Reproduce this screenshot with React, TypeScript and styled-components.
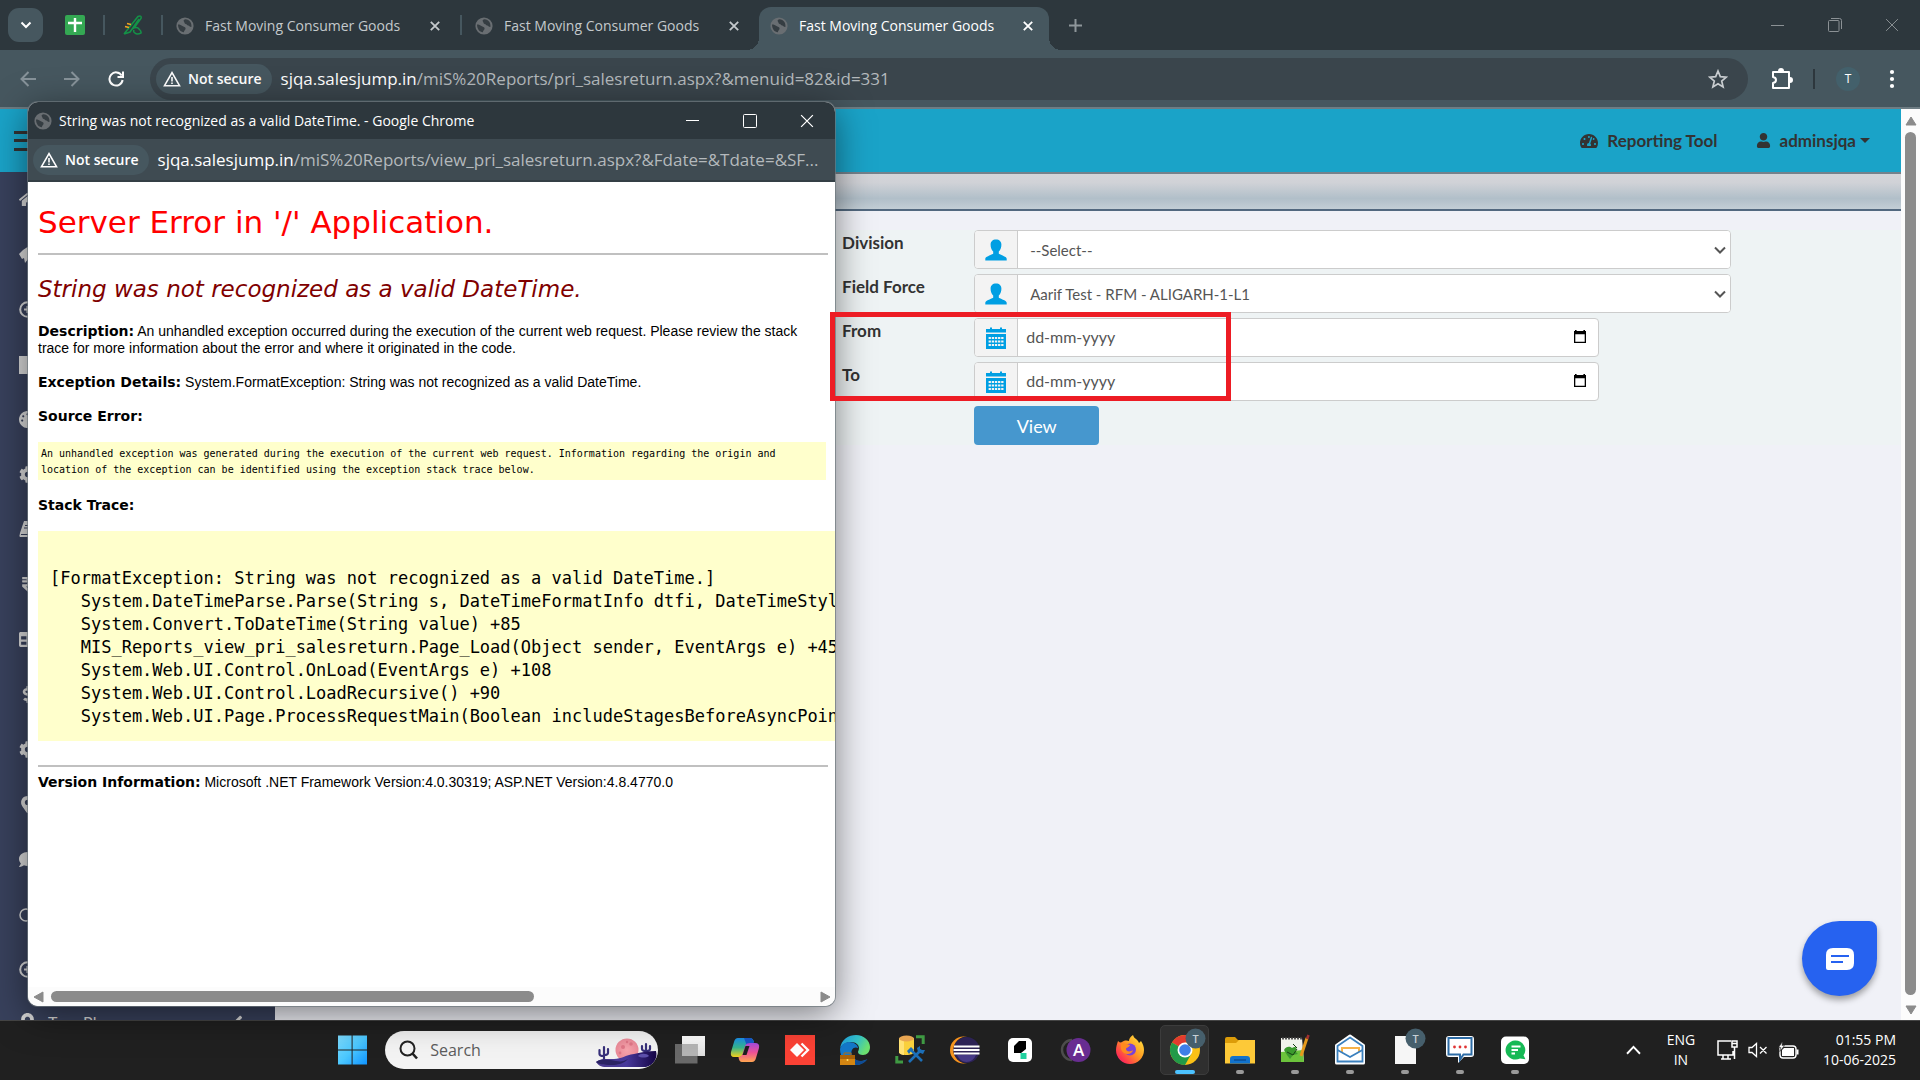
import React from 'react';
import styled, { createGlobalStyle, css } from 'styled-components';
import {
  FaHome, FaPalette, FaCog, FaRupeeSign, FaTable,
  FaDollarSign, FaMapMarkerAlt, FaComment, FaUser, FaTachometerAlt, FaAngleLeft,
} from 'react-icons/fa';

const GlobalStyle = createGlobalStyle`
  * { box-sizing: border-box; }
  html, body { margin: 0; height: 100%; overflow: hidden; }
  body { font-family: "Open Sans", "Noto Sans", sans-serif; }
  button, input, select { font: inherit; margin: 0; }
  svg { display: block; flex: none; }
`;

const uiFont = '"Open Sans", "Noto Sans", sans-serif';
const pageFont = 'Lato, "Open Sans", sans-serif';

const Screen = styled.div`
  height: 100vh;
  display: flex;
  flex-direction: column;
  position: relative;
  overflow: hidden;
`;

const PlainButton = styled.button`
  background: none;
  border: 0;
  padding: 0;
  color: inherit;
  display: inline-flex;
  align-items: center;
  justify-content: center;
`;

/* ---------- browser chrome ---------- */

const TabStrip = styled.header`
  height: 50px;
  flex: none;
  display: flex;
  align-items: center;
  padding: 0 0 0 8px;
  background: #2d373d;
  color: #c4c9cc;
`;

const TabSearch = styled(PlainButton)`
  width: 35px;
  height: 34px;
  margin-right: 22px;
  border-radius: 11px;
  background: #46575f;
  color: #fff;
`;

const Divider = styled.span<{ $dark?: boolean; $space: number }>`
  width: 2px;
  height: 20px;
  flex: none;
  margin: 0 ${p => p.$space}px;
  background: ${p => (p.$dark ? '#2d373d' : '#46575f')};
`;

const Tab = styled.div<{ $active?: boolean }>`
  position: relative;
  display: flex;
  align-items: center;
  width: ${p => (p.$active ? 290 : 297)}px;
  height: 43px;
  align-self: flex-end;
  padding: ${p => (p.$active ? '0 16px 6px 11px' : '0 20px 6px 13px')};
  font-size: 14px;
  ${p => p.$active && css`
    background: #46575f;
    color: #fff;
    border-radius: 12px 12px 0 0;
    &::before, &::after {
      content: "";
      position: absolute;
      bottom: 0;
      width: 12px;
      height: 12px;
    }
    &::before {
      left: -12px;
      background: radial-gradient(circle at 0 0, transparent 12px, #46575f 12px);
    }
    &::after {
      right: -12px;
      background: radial-gradient(circle at 100% 0, transparent 12px, #46575f 12px);
    }
  `}
`;

const TabTitle = styled.span`
  flex: 1;
  margin-left: 11px;
  white-space: nowrap;
  overflow: hidden;
`;

const TabRow = styled.div`
  display: flex;
  align-items: center;
  height: 50px;
  margin-left: -18px;
`;

const NewTab = styled(PlainButton)`
  margin-left: 20px;
`;

const CaptionButtons = styled.div<{ $bright?: boolean }>`
  margin-left: auto;
  display: flex;
  color: ${p => (p.$bright ? '#fff' : '#8b9195')};
  button { width: 57px; height: ${p => (p.$bright ? 36 : 48)}px; }
`;

const Toolbar = styled.div`
  height: 59px;
  flex: none;
  display: flex;
  align-items: center;
  padding: 0 16px 0 12px;
  background: #46575f;
  border-bottom: 2px solid #6e7d84;
  color: #fff;
`;

const NavButton = styled(PlainButton)<{ $off?: boolean }>`
  width: 32px;
  height: 32px;
  margin-right: 12px;
  color: ${p => (p.$off ? '#87939a' : '#fff')};
`;

const Omnibox = styled.div`
  flex: 1;
  height: 42px;
  display: flex;
  align-items: center;
  margin: 0 23px 0 6px;
  padding: 0 20px 0 6px;
  border-radius: 21px;
  background: #3a454c;
`;

const SecureChip = styled(PlainButton)`
  height: 30px;
  flex: none;
  gap: 7px;
  padding: 0 10px 0 7px;
  border-radius: 15px;
  background: #46575f;
  color: #fff;
  font-size: 14px;
  font-weight: 600;
`;

const Address = styled.span`
  flex: 1;
  margin-left: 9px;
  white-space: nowrap;
  color: #b4b9bc;
  font-size: 17px;
  b { color: #fff; font-weight: 400; }
`;

const Avatar = styled(PlainButton)`
  width: 24px;
  height: 24px;
  margin: 0 20px 0 1px;
  border-radius: 50%;
  background: #43606b;
  font-size: 12px;
`;

/* ---------- web page ---------- */

const Viewport = styled.div`
  flex: 1;
  min-height: 0;
  display: flex;
  background: #f0f1f7;
  font-family: ${pageFont};
`;

const Page = styled.div`
  flex: 1;
  min-width: 0;
  display: flex;
  flex-direction: column;
`;

const TopBar = styled.div`
  height: 63px;
  flex: none;
  display: flex;
  align-items: center;
  padding: 0 31px 0 14px;
  background: #1aa3c8;
  color: #333;
`;

const Burger = styled(PlainButton)`
  width: 24px;
  height: 20px;
  flex-direction: column;
  justify-content: space-between;
  i { width: 24px; height: 3px; background: #333; }
`;

const TopLinks = styled.nav`
  margin-left: auto;
  display: flex;
  gap: 38px;
  a {
    display: flex;
    align-items: center;
    gap: 9px;
    color: inherit;
    text-decoration: none;
    font-weight: 700;
    font-size: 17px;
  }
`;

const Caret = styled.i`
  margin-left: -5px;
  border: 5px solid transparent;
  border-top-color: #333;
  border-bottom: 0;
`;

const Columns = styled.div`
  flex: 1;
  min-height: 0;
  display: flex;
`;

const SideMenu = styled.nav`
  width: 275px;
  flex: none;
  overflow: hidden;
  background: #38415c;
`;

const MenuLink = styled.a<{ $low?: boolean }>`
  display: flex;
  align-items: center;
  height: ${p => (p.$low ? 49 : 55)}px;
  padding: 0 27px 0 19px;
  gap: 12px;
  color: #d8d8d8;
  font-size: 16px;
  text-decoration: none;
  span { flex: 1; }
`;

const Content = styled.main`
  flex: 1;
  min-width: 0;
`;

const Ribbon = styled.div`
  height: 39px;
  border-top: 2px solid #74828c;
  border-bottom: 2px solid #52687f;
  background: linear-gradient(#d4d5d9, #d0d2d7 25%, #b1bfc9 70%, #c3ced6);
`;

const Form = styled.form`
  display: grid;
  grid-template-columns: 35% 8% minmax(0, 1fr);
  grid-auto-rows: 39px;
  row-gap: 5px;
  margin-top: 19px;
  background: #eef3f4;
`;

const Label = styled.label`
  grid-column: 2;
  font-size: 17px;
  font-weight: 700;
  line-height: 26px;
  color: #333;
  margin-left: -2px;
`;

const Group = styled.div<{ $short?: boolean }>`
  grid-column: 3;
  display: grid;
  grid-template-columns: 43px minmax(0, 1fr);
  width: ${p => (p.$short ? '67.4%' : '81.7%')};
  border: 1px solid #ccc;
  border-radius: 4px;
  background: #fff;
  color: #555;
  overflow: hidden;
`;

const Addon = styled.span`
  display: flex;
  align-items: center;
  justify-content: center;
  border-right: 1px solid #ccc;
  background: #f3f3f3;
  color: #009fe3;
`;

const SelectWrap = styled.div`
  display: grid;
  align-items: center;
  > * { grid-area: 1 / 1; }
  > svg { justify-self: end; margin-right: 4px; pointer-events: none; }
`;

const Select = styled.select`
  appearance: none;
  height: 37px;
  padding: 0 12px;
  border: 0;
  background: #fff;
  color: #555;
  font-size: 15px;
`;

const DateField = styled.div`
  display: flex;
  align-items: center;
  padding-right: 11px;
  padding-bottom: 2px;
  input {
    flex: 1;
    min-width: 0;
    height: 35px;
    border: 0;
    padding: 0 8px;
    background: none;
    font-size: 16px;
    color: #555;
  }
  input::placeholder { color: #555; opacity: 1; }
`;

const ViewButton = styled.button`
  grid-column: 3;
  width: 125px;
  height: 39px;
  border: 0;
  border-radius: 4px;
  background: #4697ce;
  color: #fff;
  font-size: 18px;
`;

const VScroll = styled.div`
  width: 19px;
  flex: none;
  display: flex;
  flex-direction: column;
  align-items: center;
  justify-content: space-between;
  padding: 6px 0 4px;
  background: #fcfcfc;
  color: #8b8b8b;
  i { flex: 1; width: 11px; margin: 5px 0 9px; border-radius: 6px; background: currentColor; }
`;

const ChatBubble = styled(PlainButton)`
  position: absolute;
  right: 43px;
  bottom: 84px;
  width: 75px;
  height: 75px;
  border-radius: 38px 8px 38px 38px;
  background: #2662f0;
  box-shadow: 0 4px 6px rgba(0, 0, 0, 0.35);
`;

const RedFrame = styled.div`
  position: absolute;
  left: 830px;
  top: 312px;
  width: 401px;
  height: 89px;
  border: 5px solid #ed1c24;
  z-index: 3;
  pointer-events: none;
`;

/* ---------- pop-up window ---------- */

const Popup = styled.section`
  position: absolute;
  left: 28px;
  top: 102px;
  width: 807px;
  height: 904px;
  z-index: 2;
  display: flex;
  flex-direction: column;
  overflow: hidden;
  border-radius: 10px;
  background: #fff;
  box-shadow: 0 0 0 1px rgba(110, 120, 125, 0.7), 0 8px 36px rgba(0, 0, 0, 0.5);
`;

const PopupTitle = styled.div`
  height: 37px;
  flex: none;
  display: flex;
  align-items: center;
  padding-left: 6px;
  background: #2d373d;
  color: #fff;
  font-size: 14px;
  > span { margin-left: 7px; }
`;

const PopupAddress = styled.div`
  height: 43px;
  flex: none;
  display: flex;
  align-items: center;
  padding: 0 5px;
  background: #3f4b52;
  border-bottom: 2px solid #343f45;
`;

const ErrorPage = styled.article`
  flex: 1;
  min-height: 0;
  padding: 0 0 0 10px;
  overflow: hidden;
  color: #000;
  font-family: "Liberation Sans", Arial, sans-serif;
  font-size: 14px;
  line-height: 17px;
  b { font-family: "DejaVu Sans", Verdana, sans-serif; font-size: 14px; }
  hr { margin: 0 7px 7px 0; border: 0; height: 2px; background: #c0c0c0; }
  p { margin: 0 24px 17px 0; }
`;

const ErrorTitle = styled.h1`
  margin: 22px 0 13px;
  font: 400 31px/36px "DejaVu Sans", Verdana, sans-serif;
  color: #f00;
`;

const ErrorSubtitle = styled.h2`
  margin: 19px 0;
  font: italic 400 23px/30px "DejaVu Sans", Verdana, sans-serif;
  color: #800000;
`;

const SourceBox = styled.pre`
  margin: 0 9px 17px 0;
  padding: 4px 3px 2px;
  background: #ffc;
  font: 10px/16px "DejaVu Sans Mono", monospace;
`;

const StackBox = styled.pre`
  margin: 0 0 24px;
  padding: 13px 12px;
  background: #ffc;
  overflow: hidden;
  font: 17px/23px "DejaVu Sans Mono", "Liberation Mono", monospace;
`;

const HScroll = styled.div`
  height: 19px;
  flex: none;
  display: flex;
  align-items: center;
  justify-content: space-between;
  padding: 0 4px 0 5px;
  background: #fcfcfc;
  color: #8b8b8b;
  i { width: 483px; height: 11px; margin: 0 auto 0 6px; border-radius: 6px; background: currentColor; }
`;

/* ---------- taskbar ---------- */

const Taskbar = styled.footer`
  height: 60px;
  flex: none;
  display: flex;
  align-items: center;
  padding: 0 24px 1px 0;
  border-top: 1px solid #454545;
  background: #202020;
  color: #fff;
`;

const Apps = styled.div`
  display: flex;
  align-items: center;
  margin-left: 17.1%;
`;

const AppButton = styled(PlainButton)<{ $active?: boolean }>`
  width: 55px;
  height: 58px;
  position: relative;
  ${p => p.$active && css`
    &::before {
      content: "";
      position: absolute;
      inset: 4px 3px;
      border: 1px solid #3c3c3c;
      border-radius: 5px;
      background: #2f2f2f;
    }
  `}
  > svg { position: relative; }
`;

const RunMark = styled.i<{ $active?: boolean }>`
  position: absolute;
  bottom: 5px;
  width: ${p => (p.$active ? 20 : 8)}px;
  height: 4px;
  border-radius: 2px;
  background: ${p => (p.$active ? '#4cc2ff' : '#9a9a9a')};
`;

const SearchPill = styled.label`
  width: 273px;
  height: 38px;
  display: flex;
  align-items: center;
  margin: 0 4px 0 6px;
  padding-left: 14px;
  border-radius: 19px;
  background: #f3f3f3;
  overflow: hidden;
  input {
    flex: 1;
    min-width: 0;
    margin-left: 12px;
    padding: 0;
    border: 0;
    background: none;
    font-size: 16px;
  }
  input::placeholder { color: #5c5c5c; opacity: 1; }
`;

const Tray = styled.div`
  margin-left: auto;
  display: flex;
  align-items: center;
  font-size: 14px;
  line-height: 20px;
`;

const Stack = styled.div<{ $right?: boolean }>`
  display: flex;
  flex-direction: column;
  min-width: 40px;
  margin-left: ${p => (p.$right ? 0 : 20)}px;
  align-items: ${p => (p.$right ? 'flex-end' : 'center')};
`;

const TrayIcons = styled.div`
  display: flex;
  align-items: center;
  gap: 10px;
  margin: 0 24px 0 16px;
`;

/* ---------- drawings ---------- */

const Globe = () => (
  <svg width="18" height="18" viewBox="0 0 18 18">
    <circle cx="9" cy="9" r="8.6" fill="#696e72" />
    <path d="M2 7.500c2 0 3.400.6 4.400 1.600 1.200 1.100 3.200.6 3.200 2.400 0 1.600-1.600 1.500-1.700 3.800C4.500 15 2 12 2 7.500zM9.500 2.200c-1.300.4-2.600 1.200-1.600 2.300.9 1 .2 2 1.700 2.400 1.500.3 1.200 1.500 2.600 1.500 1.200 0 1.100 1.700 3.200 1.600C16 6 13.500 2.300 9.500 2.200z" fill="#353d42" />
  </svg>
);

const CloseX = ({ size = 10, w = 1.8 }: { size?: number; w?: number }) => (
  <svg width={size} height={size} viewBox="0 0 10 10" fill="none" stroke="currentColor" strokeWidth={w}>
    <path d="M.8.8l8.400 8.400M9.200.8L.8 9.200" />
  </svg>
);

const Warn = () => (
  <svg width="18" height="16" viewBox="0 0 18 16" fill="none" stroke="#fff" strokeWidth="1.6">
    <path d="M9 1.600L1.500 14.700h15z" />
    <path d="M9 6v4.500M9 11.500v1.600" />
  </svg>
);

const Tri = ({ d }: { d: string }) => (
  <svg width="12" height="12" viewBox="0 0 12 12" fill="currentColor" stroke="currentColor" strokeWidth="1" strokeLinejoin="round"><path d={d} /></svg>
);

const Person = () => (
  <svg width="22" height="22" viewBox="0 0 22 22" fill="currentColor">
    <path d="M11 .5c3.400 0 5.400 2 5.400 5.200 0 2.800-.9 5.200-2.600 6.700v2.400c2.600 1.500 7.900 2.800 7.900 5V21.500H.3v-1.700c0-2.200 5.300-3.500 7.900-5v-2.400C6.500 10.900 5.600 8.500 5.600 5.700 5.600 2.500 7.600.5 11 .5z" />
  </svg>
);

const Calendar = () => (
  <svg width="20" height="22" viewBox="0 0 20 22">
    <path d="M0 2h4V.500h2V2h8V.500h2V2h4v3.500H0zM0 7h20v15H0z" fill="#009fe3" />
    <path d="M2.600 11h15M2.600 14.500h15M2.600 18h15" stroke="#f3f3f3" strokeWidth="2.200" strokeDasharray="2.300 .85" />
  </svg>
);

const DateIcon = () => (
  <svg width="14" height="15" viewBox="0 0 14 15">
    <path d="M2 1h1.600v1h6.800V1H12v1h1v12H1V2h1z" fill="#000" />
    <path d="M2.300 5.300h9.400v7.400H2.300z" fill="#fff" />
  </svg>
);

const Chevron = ({ d, w = 12, h = 8, s = 2 }: { d: string; w?: number; h?: number; s?: number }) => (
  <svg width={w} height={h} viewBox="0 0 12 8" fill="none" stroke="currentColor" strokeWidth={s}><path d={d} /></svg>
);

const Min = () => <svg width="13" height="13" viewBox="0 0 13 13" stroke="currentColor"><path d="M0 6.500h13" /></svg>;
const Max = () => <svg width="14" height="14" viewBox="0 0 14 14" fill="none" stroke="currentColor"><rect x=".5" y=".5" width="13" height="13" rx="1" /></svg>;
const Restore = () => (
  <svg width="14" height="14" viewBox="0 0 14 14" fill="none" stroke="currentColor">
    <rect x=".5" y="2.500" width="10.500" height="11" rx="1" /><path d="M3 .500h8.500q2 0 2 2V11" />
  </svg>
);

const Badge = () => (
  <>
    <circle cx="25.500" cy="3.500" r="10" fill="#465f6c" />
    <text x="25.500" y="7.500" fontSize="11" fontWeight="600" fill="#c6d0d5" textAnchor="middle" fontFamily={uiFont}>T</text>
  </>
);

const icon = (children: React.ReactNode) => (
  <svg width="30" height="30" viewBox="0 0 30 30" overflow="visible">{children}</svg>
);

const WindowsLogo = icon(
  <>
    <defs><linearGradient id="win" x1="0" y1="0" x2="1" y2="1"><stop offset="0" stopColor="#7fdcff" /><stop offset=".5" stopColor="#4cc8ff" /><stop offset="1" stopColor="#0f93ff" /></linearGradient></defs>
    <path d="M1 .500h13.600v14H1zM15.600.500H30v14H15.600zM1 15.500h13.600v14H1zM15.600 15.500H30v14H15.600z" fill="url(#win)" />
  </>
);

const Desert = () => (
  <svg width="62" height="38" viewBox="0 0 62 38">
    <defs>
      <linearGradient id="sand" x1="0" y1="0" x2="1" y2="0"><stop offset="0" stopColor="#4a3a8c" /><stop offset=".5" stopColor="#47389b" /><stop offset="1" stopColor="#150545" /></linearGradient>
      <radialGradient id="moon"><stop offset="0" stopColor="#f7a5ad" /><stop offset="1" stopColor="#ea8a98" /></radialGradient>
    </defs>
    <circle cx="31" cy="19" r="11.500" fill="url(#moon)" />
    <circle cx="27" cy="16" r="2" fill="#df7787" /><circle cx="35" cy="13" r="1.800" fill="#df7787" /><circle cx="31" cy="11" r="1.200" fill="#df7787" /><circle cx="24" cy="22" r="1.400" fill="#df7787" />
    <path d="M8 31V16M3.500 19v4q0 2 4 2M12 18v4q0 2-4 2M50 24V13M46 15v3q0 2 4 2M54 15v3q0 2-4 2" stroke="#37307a" strokeWidth="2.200" fill="none" strokeLinecap="round" />
    <path d="M0 31c4-4 12-3 18-3 8 0 11-4 20-5 8-2 14-3 22-3 2 7-2 14-10 16H10C5 36 2 34 0 31z" fill="url(#sand)" />
    <path d="M0 31c6-4 14-2 20-1s8 0 12-2c-5 5-8 5-14 6-8 0-14 0-18-3z" fill="#2b2363" />
    <path d="M42 25c2-3 9-3 11 0-3 2-8 2-11 0z" fill="#5d50ab" />
  </svg>
);

type App = { name: string; art: React.ReactNode; run?: boolean; active?: boolean };

const apps: App[] = [
  { name: 'Task view', art: icon(<><defs><linearGradient id="tv" x2="0" y2="1"><stop stopColor="#fff" /><stop offset="1" stopColor="#dcdcdc" /></linearGradient></defs><path d="M7 1h23v20H7z" fill="url(#tv)" /><path d="M0 9h22.500v19.500H0z" fill="#777" opacity=".85" /><path d="M7 9h15.500v12H7z" fill="#b4b4b4" /></>) },
  { name: 'Copilot', art: icon(<><defs><linearGradient id="co1" x2="0" y2="1"><stop stopColor="#1b8fe8" /><stop offset=".5" stopColor="#35b58d" /><stop offset="1" stopColor="#f5d21c" /></linearGradient><linearGradient id="co2" x2="0" y2="1"><stop stopColor="#a54be0" /><stop offset=".5" stopColor="#ef5296" /><stop offset="1" stopColor="#ffa650" /></linearGradient></defs><path d="M8 3h12q3 0 4 4h-4q-3 0-4 4l-2.500 8q-1 3-4 3H4q-4 0-3-5L4 7q1-4 4-4z" fill="url(#co1)" /><path d="M14 3h6q3 0 4 5h-4q-2 0-3 3z" fill="#1758c9" /><path d="M22 27H12q-3 0-3.500-5 3 0 4.500-4l2-7q1-3 5-3h5q5 0 4 5l-3 10q-1 4-4 4z" fill="url(#co2)" /><path d="M15.500 11h4l-3 9h-4z" fill="#202020" /></>) },
  { name: 'AnyDesk', art: icon(<><path d="M0 0h30v30H0z" fill="#fb4235" /><path d="M12 8l7 7-7 7-7-7z" fill="#fff" /><path d="M16.500 8.500L23 15l-6.500 6.500" fill="none" stroke="#fff" strokeWidth="2.300" /></>) },
  { name: 'Edge', art: icon(<><defs><linearGradient id="ed" x1="0" y1="0" x2="1" y2=".4"><stop stopColor="#1c9ade" /><stop offset=".6" stopColor="#35c1c4" /><stop offset="1" stopColor="#6be070" /></linearGradient></defs><path d="M0 14C1 4 9 0 16 0c8 0 14 6 14 12 0 5-3 8-7 8-3 0-5-1-5-3 0-1 1-2 1-4 0-3-3-6-8-6S1 10 0 14z" fill="url(#ed)" /><path d="M0 14c1-4 5-7 9-7 5 0 9 3 9 6-4-2-8 2-6 7 2 6 9 8 15 4-3 4-7 6-11 6C6 30 0 23 0 14z" fill="#1478c8" /><path d="M12 16c-1 5 3 10 9 10 3 0 5-1 6.500-2C25 28 20 30 16 30c-5-3-6-9-4-14z" fill="#104c94" /><path d="M0 20h15v10H0z" fill="#d38512" /><path d="M4 20v-2h7v2" stroke="#b46a08" fill="none" /><path d="M0 20h15v4H0z" fill="#a96208" /><circle cx="7.500" cy="25" r="1" fill="#ffe36b" /></>) },
  { name: 'Database tools', art: icon(<><path d="M4 3v14c0 4 15 4 15 0V3z" fill="#f9d03c" /><path d="M4 3v14c0 2 3 3 5 3V5z" fill="#ffe274" /><ellipse cx="11.500" cy="3.500" rx="7.500" ry="3" fill="#e9a652" /><path d="M21 1.800h7.200V9M8 27H1.800v-6" fill="none" stroke="#3f9a43" strokeWidth="3" /><path d="M14 27l12-12M15 14l12 12" stroke="#1c6fb8" strokeWidth="2.600" /><path d="M12 16l4-4 3 3-3 1-2 3zM23 17l-1-4 3-2v3l2 1h3l-2 4z" fill="#1c6fb8" /></>) },
  { name: 'Eclipse', art: icon(<><circle cx="13.500" cy="15" r="13.500" fill="#f7941e" /><circle cx="17" cy="15" r="13.500" fill="#202020" /><circle cx="16.500" cy="15" r="13" fill="#2c2255" /><path d="M4 11.500h25.500M3.500 15h26M4 18.500h25.500" stroke="#fff" strokeWidth="2.200" /><path d="M7 20h19q-3 7-9.500 7T7 20z" fill="#463a86" /></>) },
  { name: 'Workspace', art: icon(<><rect x="3" y="3" width="24" height="24" rx="5" fill="#fff" /><path d="M14 6h7v8l-5 4H9v-7z" fill="#000" /><path d="M15.500 18h6v6h-6z" fill="#21d19f" /></>) },
  { name: 'Access', art: icon(<><path d="M12 5A10 10 0 1 0 12 25" fill="none" stroke="#4c4c4c" strokeWidth="2.400" /><circle cx="18.500" cy="15" r="12" fill="#682d91" /><text x="18.500" y="21" fontSize="17" fontWeight="600" fill="#fff" textAnchor="middle" fontFamily={uiFont}>A</text></>) },
  { name: 'Firefox', art: icon(<><defs><linearGradient id="ff" x1="1" y1="0" x2="0" y2="1"><stop stopColor="#fff044" /><stop offset=".45" stopColor="#ff9a22" /><stop offset=".8" stopColor="#ff3350" /><stop offset="1" stopColor="#e0167e" /></linearGradient></defs><path d="M3 6c1 1 2 1.500 3 1.500C9 5 12 5 14 6c0-2 1-4 4-6 1 4 5 4 6 8l2-2c2 3 3 6 3 9a14 14 0 0 1-28 0c0-3 1-6 2-9z" fill="url(#ff)" /><circle cx="15" cy="14.500" r="6" fill="#7a42d8" /><path d="M6 8c4 0 5 1 9 2-1 3-4 2-4 4 0 3 5 3 7 1-1 5-10 6-12-1z" fill="#ff8a1e" /></>) },
  { name: 'Chrome', run: true, active: true, art: icon(<><circle cx="15" cy="15" r="15" fill="#fbc116" /><path d="M15 15L2 7.500A15 15 0 0 1 28 7.500H15z" fill="#e33b2e" /><path d="M2 7.500A15 15 0 0 0 15 30l6.500-11.500L15 15z" fill="#229a48" /><circle cx="15" cy="15" r="7.500" fill="#fff" /><circle cx="15" cy="15" r="5.800" fill="#3f7ee8" /><Badge /></>) },
  { name: 'File Explorer', run: true, art: icon(<><path d="M0 4q0-2 2-2h8l3 3h17v6H0z" fill="#dc9c09" /><path d="M0 8h11l3-3h16v23.500H0z" fill="#fdc938" /><path d="M5 28.500V24q0-3 3-3h14q3 0 3 3v4.500z" fill="#1173cd" /><path d="M9 25h12" stroke="#0a4e96" strokeWidth="1.500" /></>) },
  { name: 'Notepad++', run: true, art: icon(<><path d="M1 3h21l2 24H1z" fill="#f1f3ec" /><path d="M1 17l22-2 1 12H1z" fill="#6cc33c" /><path d="M2 3.500h20" stroke="#555" strokeWidth="2" strokeDasharray="2 1" /><path d="M4 15c2-4 6-4 8-2 4-3 6 1 3 3l3 3-5 1-3 4-3-4z" fill="#3c9a2e" /><path d="M7 17l6 3 4-6M13 9l4 4" stroke="#173f12" fill="none" /><path d="M27 3l-6 18" stroke="#e59a1d" strokeWidth="3" /><path d="M28.500 0L27 4" stroke="#a03030" strokeWidth="2.500" /></>) },
  { name: 'Mail', run: true, art: icon(<><path d="M15 1l13.500 9.500v17.500H1.500V10.500z" fill="#fff" stroke="#fff" strokeWidth="3" strokeLinejoin="round" /><path d="M15 2.500L27.500 11v15.500h-25V11z" fill="#fff" stroke="#3b80bd" strokeWidth="1.800" /><path d="M7 17v-4h17v4" fill="none" stroke="#f7b24a" strokeWidth="2" /><path d="M2.500 15L15 22l12.500-7" fill="none" stroke="#3b80bd" strokeWidth="1.800" /></>) },
  { name: 'Document', run: true, art: icon(<><path d="M5 1h21v28H5z" fill="#f6f6f6" /><Badge /></>) },
  { name: 'Chat', run: true, art: icon(<><path d="M4 1h22q3 0 3 3v15q0 3-3 3h-7l-6 6v-6H4q-3 0-3-3V4q0-3 3-3z" fill="#fff" /><path d="M3.500 3h23v16.500h-8l-3.500 5v-5H3.500z" fill="#fff" stroke="#2d6ca6" strokeWidth="2" /><circle cx="9.500" cy="12" r="1.400" fill="#e03434" /><circle cx="15" cy="12" r="1.400" fill="#e03434" /><circle cx="20.500" cy="12" r="1.400" fill="#e03434" /></>) },
  { name: 'Messages', run: true, art: icon(<><rect x="1" y="1.500" width="28" height="27.500" rx="5" fill="#fff" /><path d="M15 5.500a10 9.500 0 1 0 5 18l5.500.8-2-4A10 9.500 0 0 0 15 5.500z" fill="#16b955" /><path d="M11.500 11.500h9M11.500 15h6.500M11.500 18.500h3.500" stroke="#fff" strokeWidth="2" /></>) },
];

const PlusRing = () => (
  <svg width="17" height="17" viewBox="0 0 17 17" fill="none" stroke="currentColor" strokeWidth="2"><circle cx="8.500" cy="8.500" r="7.300" /><path d="M8.500 5v7M5 8.500h7" /></svg>
);

const Block = () => <svg width="18" height="18"><path d="M0 0h18v18H0z" fill="currentColor" /></svg>;

const Ring = () => <svg width="14" height="14" fill="none" stroke="currentColor" strokeWidth="1.500"><circle cx="7" cy="7" r="6" /></svg>;

const Rocket = () => (
  <svg width="17" height="17" viewBox="0 0 17 17" fill="currentColor"><path d="M0 8l4-4 6-4 7-1-2 7-5 6-4 5-1-5-2 1z" /></svg>
);

const Book = () => (
  <svg width="18" height="17" viewBox="0 0 18 17"><path d="M5 0h12l-3 16H1q-1-1 0-4z" fill="currentColor" /><path d="M6 4.500h8M5 7h8M2 13.500h11" stroke="#38415c" strokeWidth="1.200" /></svg>
);

const menuIcons = [
  FaHome, Rocket, PlusRing, Block, FaPalette, FaCog, Book, FaRupeeSign, FaTable,
  FaDollarSign, FaCog, FaMapMarkerAlt, FaComment, Ring, PlusRing,
];

const stack = `
[FormatException: String was not recognized as a valid DateTime.]
   System.DateTimeParse.Parse(String s, DateTimeFormatInfo dtfi, DateTimeStyles styles) +1477
   System.Convert.ToDateTime(String value) +85
   MIS_Reports_view_pri_salesreturn.Page_Load(Object sender, EventArgs e) +459
   System.Web.UI.Control.OnLoad(EventArgs e) +108
   System.Web.UI.Control.LoadRecursive() +90
   System.Web.UI.Page.ProcessRequestMain(Boolean includeStagesBeforeAsyncPoint, Boolean includeStagesAfterAsyncPoint) +1533`;

const NotSecure = () => <SecureChip><Warn />Not secure</SecureChip>;

const BrowserTab = ({ active }: { active?: boolean }) => (
  <Tab $active={active}>
    <Globe />
    <TabTitle>Fast Moving Consumer Goods</TabTitle>
    <PlainButton aria-label="Close tab"><CloseX /></PlainButton>
  </Tab>
);

const Tabs = () => (
  <TabRow>
    <BrowserTab />
    <Divider $space={0} />
    <BrowserTab />
    <BrowserTab active />
    <NewTab aria-label="New tab">
      <svg width="13" height="13" viewBox="0 0 13 13" stroke="#8e969a" strokeWidth="2"><path d="M6.500 0v13M0 6.500h13" /></svg>
    </NewTab>
  </TabRow>
);

const SelectRow = ({ id, label, value }: { id: string; label: string; value: string }) => (
  <>
    <Label htmlFor={id}>{label}</Label>
    <Group>
      <Addon><Person /></Addon>
      <SelectWrap>
        <Select id={id}><option>{value}</option></Select>
        <Chevron d="M1 1.500l5 5 5-5" />
      </SelectWrap>
    </Group>
  </>
);

const DateRow = ({ id, label }: { id: string; label: string }) => (
  <>
    <Label htmlFor={id}>{label}</Label>
    <Group $short>
      <Addon><Calendar /></Addon>
      <DateField>
        <input id={id} type="text" placeholder="dd-mm-yyyy" />
        <PlainButton type="button" aria-label="Pick a date"><DateIcon /></PlainButton>
      </DateField>
    </Group>
  </>
);

export default function App() {
  return (
    <Screen>
      <GlobalStyle />
      <TabStrip>
        <TabSearch aria-label="Search tabs"><Chevron d="M1.500 1.500L6 6l4.500-4.500" /></TabSearch>
        <svg width="20" height="20" viewBox="0 0 20 20"><rect width="20" height="20" rx="2" fill="#34a853" /><path d="M10 3v14M3 8h14" stroke="#fff" strokeWidth="2.400" /></svg>
        <Divider $space={18} />
        <svg width="20" height="20" viewBox="0 0 20 20" fill="none" stroke="#149247" strokeWidth="1.500">
          <path d="M1 19L15 1.500q4-1.500 3 2L11 13M1 19l6-2 9-13M9 14q5-3 7 0 2.500 2 2 4-4 2-6 0-2-1-1-3" />
          <path d="M4 8.500l4 1M2 11.500l4 1" stroke="#f0a520" />
        </svg>
        <Divider $space={18} />
        <Tabs />
        <CaptionButtons>
          <PlainButton aria-label="Minimize"><Min /></PlainButton>
          <PlainButton aria-label="Restore"><Restore /></PlainButton>
          <PlainButton aria-label="Close"><CloseX size={14} w={0.7} /></PlainButton>
        </CaptionButtons>
      </TabStrip>

      <Toolbar>
        <NavButton $off aria-label="Back"><svg width="16" height="16" viewBox="0 0 16 16" fill="none" stroke="currentColor" strokeWidth="2"><path d="M16 8H2M8.500 1L1.500 8l7 7" /></svg></NavButton>
        <NavButton $off aria-label="Forward"><svg width="16" height="16" viewBox="0 0 16 16" fill="none" stroke="currentColor" strokeWidth="2"><path d="M0 8h14M7.500 1l7 7-7 7" /></svg></NavButton>
        <NavButton aria-label="Reload"><svg width="16" height="16" viewBox="0 0 16 16" fill="none" stroke="currentColor" strokeWidth="2"><path d="M13.700 4.500A6.600 6.600 0 1 0 14.600 9M15 .500v5.500H9.500" /></svg></NavButton>
        <Omnibox>
          <NotSecure />
          <Address><b>sjqa.salesjump.in</b>/miS%20Reports/pri_salesreturn.aspx?&amp;menuid=82&amp;id=331</Address>
          <svg width="20" height="20" viewBox="0 0 20 20" fill="none" stroke="#c9cdd0" strokeWidth="1.700"><path d="M10 2l2.300 5.600 6 .5-4.600 3.900 1.400 5.900L10 14.700 4.900 17.900 6.300 12 1.700 8.100l6-.5z" /></svg>
        </Omnibox>
        <PlainButton aria-label="Extensions"><svg width="22" height="22" viewBox="0 0 22 22" fill="none" stroke="#fff" strokeWidth="2"><path d="M2 4h16v16H2v-5q3-.5 3-3t-3-3z" strokeLinejoin="round" /><path d="M8 3a2 2 0 0 1 4 0M19 10a2 2 0 0 1 0 4" fill="#fff" /></svg></PlainButton>
        <Divider $dark $space={20} />
        <Avatar>T</Avatar>
        <PlainButton aria-label="Menu"><svg width="24" height="20" viewBox="0 0 24 20" fill="#fff"><circle cx="12" cy="3" r="2.100" /><circle cx="12" cy="10" r="2.100" /><circle cx="12" cy="17" r="2.100" /></svg></PlainButton>
      </Toolbar>

      <Viewport>
        <Page>
          <TopBar>
            <Burger aria-label="Toggle menu"><i /><i /><i /></Burger>
            <TopLinks>
              <a href="#reports"><FaTachometerAlt size={18} />Reporting Tool</a>
              <a href="#account"><FaUser size={15} />adminsjqa<Caret /></a>
            </TopLinks>
          </TopBar>
          <Columns>
            <SideMenu>
              {menuIcons.map((Item, i) => (
                <MenuLink href="#menu" key={i} aria-label="Menu entry"><Item size={17} /></MenuLink>
              ))}
              <MenuLink $low href="#tour"><FaMapMarkerAlt size={17} /><span>Tour Plan</span><FaAngleLeft size={20} /></MenuLink>
            </SideMenu>
            <Content>
              <Ribbon />
              <Form onSubmit={e => e.preventDefault()}>
                <SelectRow id="division" label="Division" value="--Select--" />
                <SelectRow id="force" label="Field Force" value="Aarif Test - RFM - ALIGARH-1-L1" />
                <DateRow id="from" label="From" />
                <DateRow id="to" label="To" />
                <ViewButton>View</ViewButton>
              </Form>
            </Content>
          </Columns>
        </Page>
        <VScroll aria-hidden="true"><Tri d="M1 10h10L6 2z" /><i /><Tri d="M1 2h10l-5 8z" /></VScroll>
      </Viewport>

      <ChatBubble aria-label="Open chat">
        <svg width="28" height="22" viewBox="0 0 28 22"><path d="M7 0h14q7 0 7 7v8q0 7-7 7H2q-2 0-2-2V7q0-7 7-7z" fill="#fff" /><path d="M5 8h18M5 14h12" stroke="#2662f0" strokeWidth="2" /></svg>
      </ChatBubble>

      <Popup>
        <PopupTitle>
          <Globe />
          <span>String was not recognized as a valid DateTime. - Google Chrome</span>
          <CaptionButtons $bright>
            <PlainButton aria-label="Minimize"><Min /></PlainButton>
            <PlainButton aria-label="Maximize"><Max /></PlainButton>
            <PlainButton aria-label="Close"><CloseX size={14} w={0.9} /></PlainButton>
          </CaptionButtons>
        </PopupTitle>
        <PopupAddress>
          <NotSecure />
          <Address><b>sjqa.salesjump.in</b>/miS%20Reports/view_pri_salesreturn.aspx?&amp;Fdate=&amp;Tdate=&amp;SF...</Address>
        </PopupAddress>
        <ErrorPage>
          <ErrorTitle>Server Error in '/' Application.</ErrorTitle>
          <hr />
          <ErrorSubtitle>String was not recognized as a valid DateTime.</ErrorSubtitle>
          <p><b>Description:</b> An unhandled exception occurred during the execution of the current web request. Please review the stack trace for more information about the error and where it originated in the code.</p>
          <p><b>Exception Details:</b> System.FormatException: String was not recognized as a valid DateTime.</p>
          <p><b>Source Error:</b></p>
          <SourceBox>{'An unhandled exception was generated during the execution of the current web request. Information regarding the origin and\nlocation of the exception can be identified using the exception stack trace below.'}</SourceBox>
          <p><b>Stack Trace:</b></p>
          <StackBox>{stack}</StackBox>
          <hr />
          <p><b>Version Information:</b> Microsoft .NET Framework Version:4.0.30319; ASP.NET Version:4.8.4770.0</p>
        </ErrorPage>
        <HScroll aria-hidden="true"><Tri d="M10 1v10L1 6z" /><i /><Tri d="M2 1v10l9-5z" /></HScroll>
      </Popup>
      <RedFrame />

      <Taskbar>
        <Apps>
          <AppButton aria-label="Start">{WindowsLogo}</AppButton>
          <SearchPill>
            <svg width="19" height="20" viewBox="0 0 19 20" fill="none" stroke="#222" strokeWidth="2"><circle cx="8.500" cy="8.500" r="7" /><path d="M13.500 13.500l4.500 5" strokeWidth="2.600" /></svg>
            <input aria-label="Search" placeholder="Search" />
            <Desert />
          </SearchPill>
          {apps.map(a => (
            <AppButton key={a.name} aria-label={a.name} $active={a.active}>
              {a.art}
              {a.run && <RunMark $active={a.active} />}
            </AppButton>
          ))}
        </Apps>
        <Tray>
          <PlainButton aria-label="Show hidden icons"><Chevron w={15} h={10} s={1.5} d="M.8 7L6 1.500 11.200 7" /></PlainButton>
          <Stack><span>ENG</span><span>IN</span></Stack>
          <TrayIcons>
            <svg width="21" height="20" viewBox="0 0 21 20" fill="none" stroke="#fff" strokeWidth="1.500"><path d="M14 1H1v14h15v-4M6 15v4M11 15v4M4 19h10M15 1h5v6h-5zM17.500 7v12M15 3.500h5" /></svg>
            <svg width="20" height="16" viewBox="0 0 20 16" fill="none" stroke="#fff" strokeWidth="1.300"><path d="M1 5.500h3L8.500 1.500v13L4 10.500H1zM12 5l6.500 6.500M18.500 5L12 11.500" /></svg>
            <svg width="21" height="17" viewBox="0 0 21 17"><rect x="2" y="4" width="16" height="12" rx="3" fill="none" stroke="#fff" strokeWidth="1.400" /><path d="M6 6h10v8H4V8zM18.500 7.500h2v5h-2z" fill="#fff" /><path d="M4.500-.500L.5 5.500h2.300l-1 4 4.700-6H4z" fill="#fff" stroke="#202020" strokeWidth=".6" /></svg>
          </TrayIcons>
          <Stack $right><span>01:55 PM</span><span>10-06-2025</span></Stack>
        </Tray>
      </Taskbar>
    </Screen>
  );
}
